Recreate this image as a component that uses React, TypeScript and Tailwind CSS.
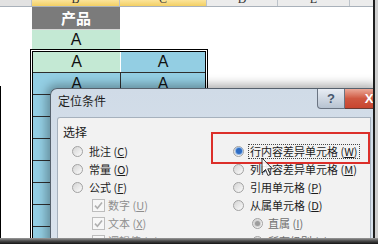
import React from "react";

function Radio({ checked = false, disabled = false }: { checked?: boolean; disabled?: boolean }) {
  return (
    <span className="flex h-[11px] w-[11px] shrink-0 items-center justify-center rounded-full border border-[#a2a2a2] bg-gradient-to-br from-[#d4d4d4] to-[#fbfbfb]">
      {checked && !disabled && (
        <span className="h-[6px] w-[6px] rounded-full bg-[#2d6cc4] shadow-[0_0_0_1px_#8fb6e6]" />
      )}
      {checked && disabled && (
        <span className="h-[5px] w-[5px] rounded-full bg-[#9d9d9d] shadow-[0_0_0_1px_#d0d0d0]" />
      )}
    </span>
  );
}

function Check() {
  return (
    <span className="flex h-[13px] w-[13px] shrink-0 items-center justify-center border border-[#bdbdbd] bg-[#f7f7f7]">
      <svg width="9" height="9" viewBox="0 0 9 9">
        <path d="M1 4.6 L3.4 7.2 L8 1.4" stroke="#b0b0b0" strokeWidth="1.6" fill="none" />
      </svg>
    </span>
  );
}

function Lbl({ t, k }: { t: string; k: string }) {
  return (
    <span>
      {t} (<u className="underline-offset-1">{k}</u>)
    </span>
  );
}

function HeaderCell({ w, letter, yellow }: { w: string; letter?: string; yellow?: boolean }) {
  return (
    <div
      className={`${w} flex h-full items-end justify-center overflow-hidden border-r border-[#bcc3ca] ${
        yellow ? "bg-gradient-to-b from-[#fbe49a] to-[#f3cf62]" : "bg-[#ececec]"
      }`}
    >
      {letter && (
        <span className="mb-[1px] font-['Liberation_Serif',serif] text-[12px] leading-[12px] text-[#333]">
          {letter}
        </span>
      )}
    </div>
  );
}

function Sheet() {
  const blueRows = [0, 1, 2, 3, 4, 5, 6, 7];
  return (
    <div className="flex flex-col font-['Liberation_Sans',sans-serif] text-[16px] text-[#111]">
      <div className="flex h-[7px] border-b border-[#a9b1ba]">
        <div className="h-full w-[32px] border-r border-[#bcc3ca] bg-[#e2e2e2]" />
        <HeaderCell w="w-[88px]" letter="B" yellow />
        <HeaderCell w="w-[87px]" letter="C" yellow />
        <HeaderCell w="w-[71px]" letter="D" />
        <HeaderCell w="w-[72px]" letter="E" />
        <div className="h-full flex-1 bg-[#ececec]" />
      </div>
      <div className="flex h-[22px]">
        <div className="w-[32px]" />
        <div className="flex w-[88px] items-center justify-center bg-[#7b7b7b] font-['Noto_Sans_CJK_SC',sans-serif] text-[15px] font-bold text-white">
          产品
        </div>
      </div>
      <div className="flex h-[20px]">
        <div className="w-[32px]" />
        <div className="flex w-[88px] items-center justify-center border-t border-[#d6d6d6] bg-[#c4e9d4]">A</div>
      </div>
      <div className="ml-[30px] flex w-[178px] flex-col border-[3px] border-double border-black bg-white">
        <div className="flex h-[20px]">
          <div className="flex w-[87px] items-center justify-center bg-[#c4e9d4]">A</div>
          <div className="flex flex-1 items-center justify-center border-l border-white bg-[#93cee3]">A</div>
        </div>
        {blueRows.map((i) => (
          <div key={i} className="flex h-[22px] border-t border-[#2e2e2e]">
            <div className="flex w-[87px] items-center justify-center bg-[#93cee3]">A</div>
            <div className="flex flex-1 items-center justify-center border-l border-[#2e2e2e] bg-[#93cee3]">A</div>
          </div>
        ))}
      </div>
    </div>
  );
}

function Dialog() {
  return (
    <div className="absolute bottom-0 left-[50px] right-0 top-[88px] flex flex-col overflow-hidden rounded-tl-[7px] border-l border-t border-[#56616d] bg-gradient-to-b from-[#d0dbe7] to-[#dae3ed] font-['Noto_Sans_CJK_SC','Noto_Sans',sans-serif] shadow-[0_0_10px_4px_rgba(0,0,0,0.3)]">
      <div className="flex h-[28px] shrink-0">
        <div className="pl-[7px] pt-[4px] text-[12px] leading-[16px] text-[#1c1c1c]">定位条件</div>
        <div className="-mr-[20px] ml-auto flex h-[20px]">
          <div className="flex h-full w-[28px] items-center justify-center rounded-bl-[4px] border border-t-0 border-[#6a7482] bg-gradient-to-b from-[#e8edf4] to-[#b7c3d1] font-['Liberation_Sans',sans-serif] text-[13px] font-bold text-[#46566c]">
            ?
          </div>
          <div className="flex h-full w-[48px] items-center justify-center border-b border-[#6a3a32] bg-gradient-to-b from-[#eaa898] via-[#cf5841] to-[#c8452f] font-['Liberation_Sans',sans-serif] text-[13px] font-bold text-white">
            X
          </div>
        </div>
      </div>
      <div className="ml-[6px] mr-[2px] flex-1 rounded-tl-[3px] border-l border-r border-t border-[#a6b1bd] bg-[#f2f2f2] text-[11px] leading-[14px] text-[#1b1b1b]">
        <div className="pl-[5px] pt-[6px] text-[12px] leading-[16px]">选择</div>
        <div className="mt-[2px] flex pl-[14px]">
          <div className="flex w-[161px] flex-col">
            <div className="flex h-[18px] items-center gap-[6px] whitespace-nowrap">
              <Radio />
              <Lbl t="批注" k="C" />
            </div>
            <div className="flex h-[18px] items-center gap-[6px] whitespace-nowrap">
              <Radio />
              <Lbl t="常量" k="O" />
            </div>
            <div className="flex h-[18px] items-center gap-[6px] whitespace-nowrap">
              <Radio />
              <Lbl t="公式" k="F" />
            </div>
            <div className="flex h-[18px] items-center gap-[3px] whitespace-nowrap pl-[20px] text-[#8e8e8e]">
              <Check />
              <Lbl t="数字" k="U" />
            </div>
            <div className="flex h-[18px] items-center gap-[3px] whitespace-nowrap pl-[20px] text-[#8e8e8e]">
              <Check />
              <Lbl t="文本" k="X" />
            </div>
            <div className="flex h-[18px] items-center gap-[3px] whitespace-nowrap pl-[20px] text-[#8e8e8e]">
              <Check />
              <Lbl t="逻辑值" k="G" />
            </div>
          </div>
          <div className="flex flex-col">
            <div className="flex h-[18px] items-center gap-[4px] whitespace-nowrap">
              <Radio checked />
              <span className="border border-dotted border-[#444] px-[1px] leading-[13px]">
                <Lbl t="行内容差异单元格" k="W" />
              </span>
            </div>
            <div className="flex h-[18px] items-center gap-[6px] whitespace-nowrap">
              <Radio />
              <Lbl t="列内容差异单元格" k="M" />
            </div>
            <div className="flex h-[18px] items-center gap-[6px] whitespace-nowrap">
              <Radio />
              <Lbl t="引用单元格" k="P" />
            </div>
            <div className="flex h-[18px] items-center gap-[6px] whitespace-nowrap">
              <Radio />
              <Lbl t="从属单元格" k="D" />
            </div>
            <div className="flex h-[18px] items-center gap-[5px] whitespace-nowrap pl-[19px] text-[#6f6f6f]">
              <Radio checked disabled />
              <Lbl t="直属" k="I" />
            </div>
            <div className="flex h-[18px] items-center gap-[5px] whitespace-nowrap pl-[19px] text-[#6f6f6f]">
              <Radio />
              <Lbl t="所有级别" k="L" />
            </div>
          </div>
        </div>
      </div>
    </div>
  );
}

export default function App() {
  return (
    <div className="relative flex h-[244px] w-[378px] overflow-hidden bg-white">
      <div className="relative h-full w-[373px] overflow-hidden">
        <Sheet />
        <Dialog />
        <div className="absolute left-[211px] top-[132px] h-[32px] w-[159px] border-2 border-[#dc2f2a]" />
        <svg className="absolute left-[261px] top-[157px] opacity-90" width="13" height="20" viewBox="0 0 13 20">
          <path
            d="M1 1 L1 16 L4.5 12.5 L7 18.5 L9.3 17.5 L6.8 11.8 L11.5 11.8 Z"
            fill="white"
            stroke="#222"
            strokeWidth="1"
            strokeLinejoin="round"
          />
        </svg>
        <div className="absolute bottom-0 left-0 top-[86px] w-px bg-black" />
      </div>
      <div className="w-[2px] bg-[#1e1e1e]" />
      <div className="flex-1 bg-[#cfcfcf]" />
      <div className="absolute bottom-0 left-0 right-0 h-[6px] bg-gradient-to-b from-[#9c9c9c] via-[#4a4a4a] to-[#151515]" />
    </div>
  );
}
